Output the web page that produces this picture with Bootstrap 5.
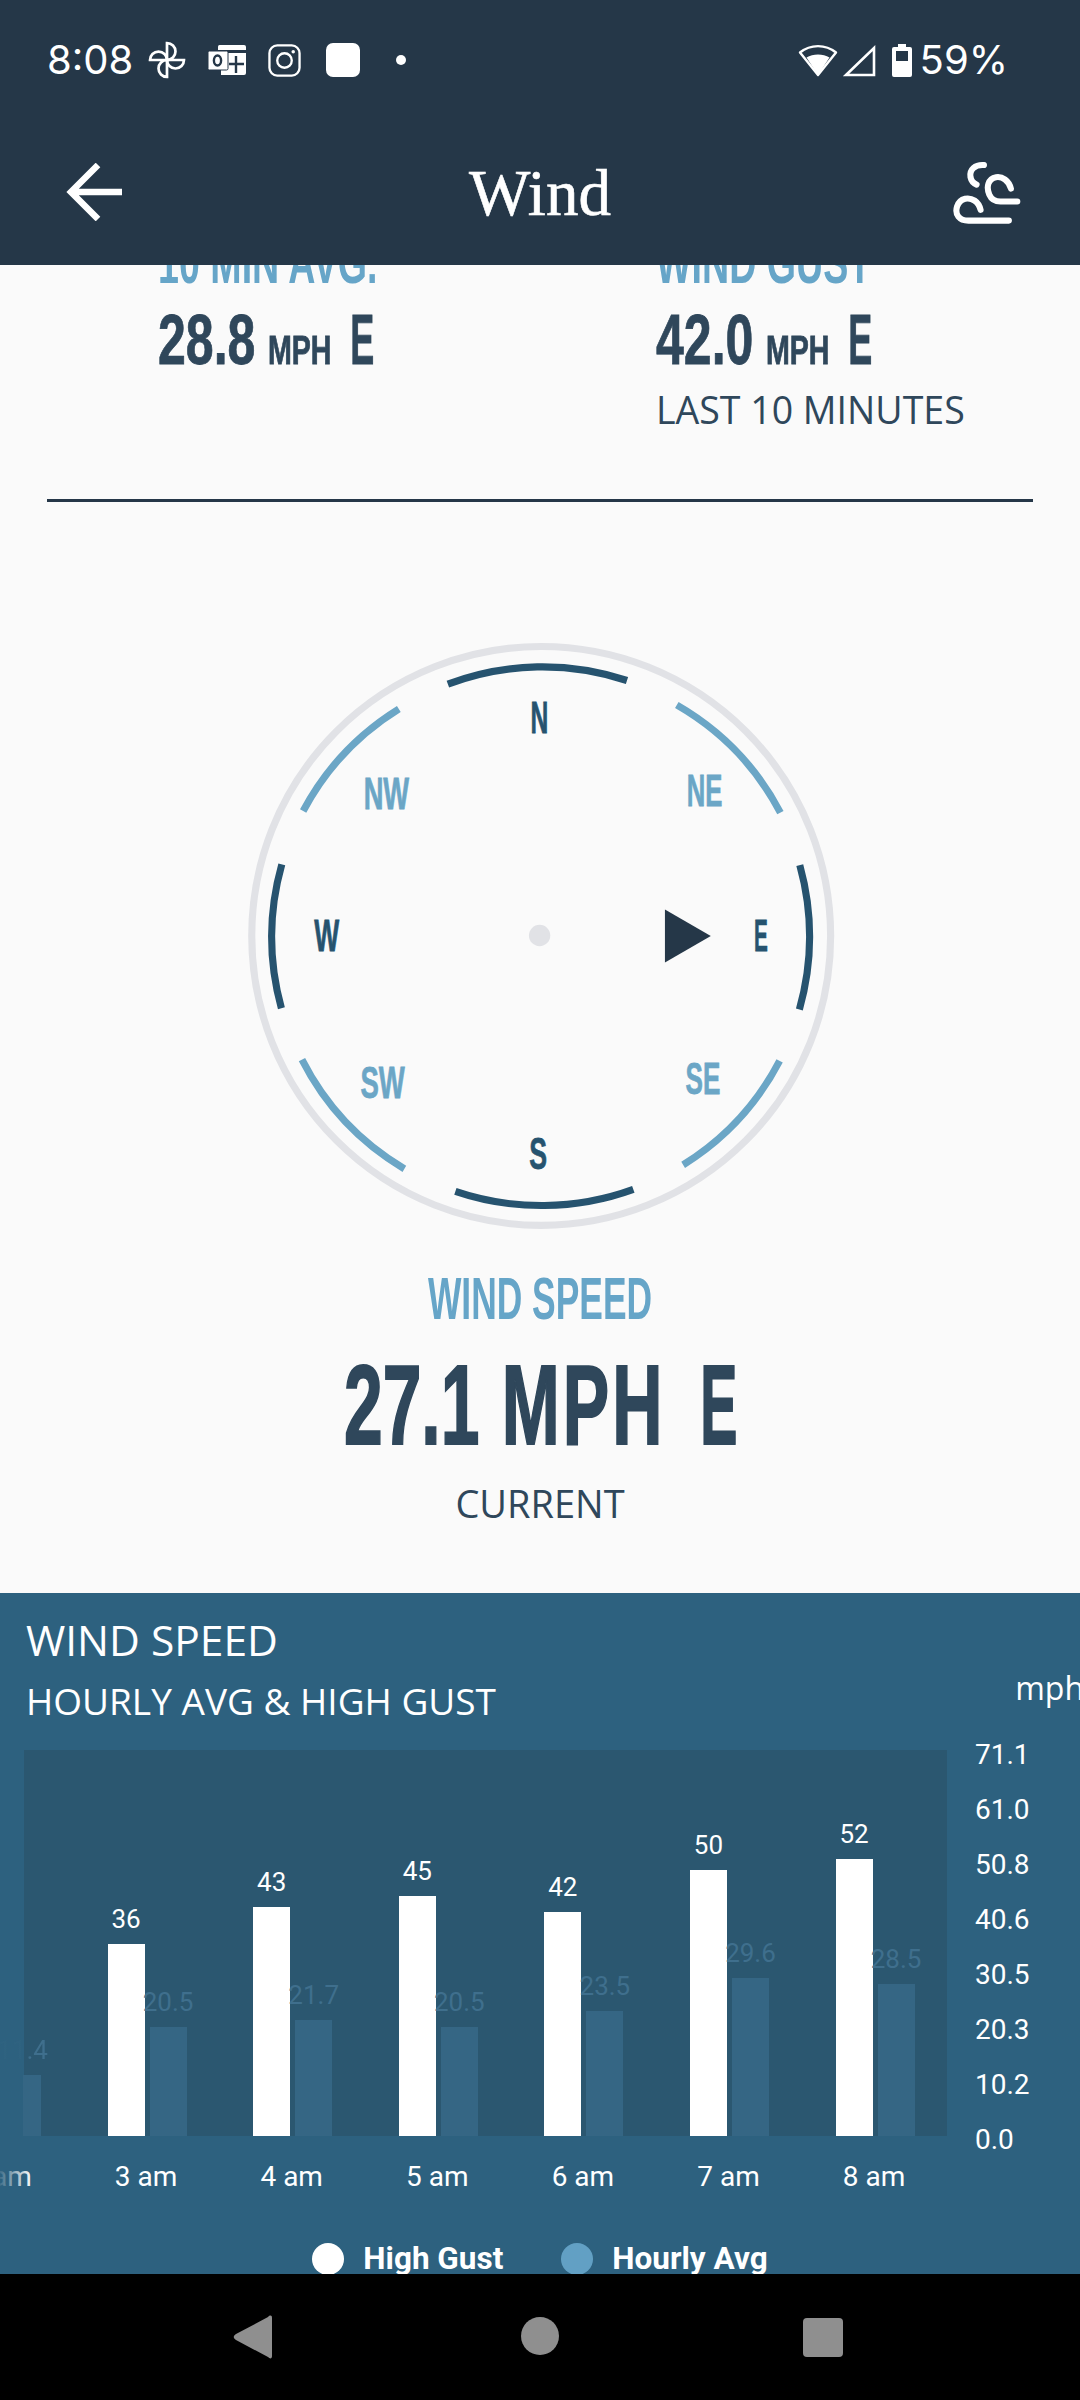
<!DOCTYPE html>
<html lang="en">

<head>
    <meta charset="UTF-8" />
    <meta name="viewport" content="width=device-width, initial-scale=1" />
    <title>Wind</title>
    <link href="https://cdn.jsdelivr.net/npm/bootstrap@5.3.2/dist/css/bootstrap.min.css" rel="stylesheet" />
    <style>
        html, body { width: 1080px; height: 2400px; overflow: hidden; background: #fafafa; }
        body { font-family: "Open Sans", sans-serif; color: #2f475b; }
        .phone { width: 1080px; height: 2400px; }
        .app-top { height: 265px; background: #253748; color: #fff; flex: none; }
        .status-row { height: 120px; padding: 0 72px 0 47px; font-family: Inter, sans-serif; font-size: 40px; line-height: 1; }
        .status-row svg { display: block; flex: none; }
        .gap-pin { margin-left: 15px; }
        .gap-app { margin-left: 22px; }
        .gap-ig { margin-left: 25px; }
        .gap-dot { margin-left: 36px; }
        .title-row { height: 145px; padding: 0 58px 0 60px; }
        .wind-title { font-family: "Liberation Serif", serif; font-size: 65px; line-height: 1; -webkit-text-stroke: .6px #fff; }
        .view { min-height: 0; overflow: hidden; background: #fafafa; }
        .stats { margin-top: -32.5px; }
        .stat-left { width: 656px; padding-left: 158px; }
        .narrow { display: block; white-space: nowrap; font-family: "Liberation Sans", sans-serif; font-weight: 700; transform-origin: 0 50%; }
        .stat-label { font-size: 60px; line-height: 60px; color: #66a5c8; transform: scaleX(.627); }
        .stat-value { font-size: 70px; line-height: 70px; margin-top: 12.5px; transform: scaleX(.715); color: #2f475b; -webkit-text-stroke: .8px #2f475b; }
        .stat-value small { font-size: 40px; font-weight: 700; line-height: 1; margin-left: -2px; }
        .stat-value i { display: inline-block; font-style: normal; line-height: 1; margin-left: 26px; transform: scaleX(.72); transform-origin: 0 50%; }
        .stat-note { font-size: 37.500px; line-height: 44px; margin-top: 12.5px; }
        .rule { height: 3px; margin: 67.5px 47px 0; background: #253748; }
        .dial { width: 620px; height: 620px; margin: 118px auto 0; display: block; }
        .dial text { font-family: "Liberation Sans", sans-serif; font-weight: 700; font-size: 112px; stroke-width: 2; }
        .speed-label { font-size: 60px; line-height: 60px; color: #66a5c8; margin-top: 28.5px; transform: scaleX(.59); transform-origin: 50% 50%; }
        .speed-value { font-size: 114px; line-height: 120px; margin: 16.5px 0 0 344px; transform: scaleX(.61); text-align: left; -webkit-text-stroke: 2px #2f475b; color: #2f475b; }
        .speed-value b { letter-spacing: 5px; margin-left: 5px; }
        .speed-value i { display: inline-block; font-style: normal; line-height: 1; margin-left: 57px; transform: scaleX(.8); transform-origin: 0 50%; }
        .speed-note { font-size: 38px; line-height: 44px; margin-top: 16px; }
        .chart-panel { margin-top: 68px; height: 700px; background: #2d617f; color: #fff; overflow: hidden; position: relative; }
        .panel-head { padding: 22px 0 0 26px; margin-bottom: 27.5px; }
        .panel-title { font-size: 42.500px; line-height: 50px; font-weight: 500; }
        .panel-sub { font-size: 37px; line-height: 44px; margin-top: 13.5px; }
        .panel-unit { font-size: 32px; line-height: 40px; position: relative; left: 4px; margin-bottom: 14.5px; }
        .chart-row { height: 386px; }
        .plot { width: 923px; height: 386px; margin-left: 24px; background: #2b5770; flex: none; font-family: Roboto, sans-serif; }
        .plot-group { width: 145.6px; height: 100%; flex: none; gap: 5px; }
        .plot-group:first-child { margin-left: -62px; }
        .plot-group:first-child .bar-avg { width: 18px; align-self: flex-end; }
        .plot-group:first-child .val-dim { background: linear-gradient(90deg, rgba(63, 111, 141, .12) 50%, #3f6f8d 65%); -webkit-background-clip: text; background-clip: text; color: transparent; }
        .bar-col { width: 37px; height: 100%; }
        .bar-val { font-size: 26px; line-height: 30px; margin-bottom: 10px; white-space: nowrap; }
        .bar-high { width: 37px; background: #fff; }
        .bar-avg { width: 37px; background: #356684; }
        .val-dim { color: #3f6f8d; }
        .y-axis { margin: -23.5px 0 0 28px; font-family: Roboto, sans-serif; font-size: 28px; }
        .y-axis div { height: 55.1px; line-height: 55.1px; }
        .x-axis { margin: 21px 0 0 -72.3px; font-family: Roboto, sans-serif; font-size: 28px; line-height: 40px; }
        .x-axis div { width: 145.6px; flex: none; text-align: center; }
        .x-fade { position: absolute; left: 0; top: 0; width: 32px; height: 100%; background: linear-gradient(90deg, rgba(45, 97, 127, .9), rgba(45, 97, 127, 0)); }
        .x-wrap { position: relative; }
        .chart-legend { margin-top: 44px; font-family: Roboto, sans-serif; font-weight: 700; font-size: 31.500px; line-height: 36px; }
        .legend-dot { width: 32px; height: 32px; border-radius: 50%; margin-right: 19px; }
        .dot-white { background: #fff; }
        .dot-blue { background: #62a0c4; margin-left: 58px; }
        .sys-nav { height: 126px; background: #000; flex: none; }
    </style>
</head>

<body>
    <div class="phone d-flex flex-column">
        <div class="app-top">
            <div class="status-row d-flex align-items-center">
                <span>8:08</span>
                <svg class="gap-pin" width="38" height="38" viewBox="-56 -56 112 112" fill="none" stroke="#fff" stroke-width="8">
                    <path d="M0 0V-50A25 25 0 0 1 0 0Z" />
                    <path d="M0 0V-50A25 25 0 0 1 0 0Z" transform="rotate(90)" />
                    <path d="M0 0V-50A25 25 0 0 1 0 0Z" transform="rotate(180)" />
                    <path d="M0 0V-50A25 25 0 0 1 0 0Z" transform="rotate(270)" />
                </svg>
                <svg class="gap-app" width="38" height="30" viewBox="0 0 38 30">
                    <path d="M10 1.5a1.5 1.5 0 0 1 1.5-1.5H36a2 2 0 0 1 2 2v3H10Z" fill="#fff" />
                    <path d="M13 8H38V28a2 2 0 0 1-2 2H13Z" fill="#fff" />
                    <rect x="0" y="6" width="20" height="19" rx="1.5" fill="#fff" stroke="#253748" stroke-width="1" />
                    <ellipse cx="9.5" cy="15.5" rx="3.6" ry="5" fill="none" stroke="#253748" stroke-width="2.4" />
                    <path d="M28 11V28M21 19H36" stroke="#253748" stroke-width="2.4" />
                </svg>
                <svg class="gap-app" width="33" height="33" viewBox="0 0 34 34" fill="none" stroke="#fff" stroke-width="2.4">
                    <rect x="1.5" y="1.5" width="31" height="31" rx="8" />
                    <circle cx="17" cy="17" r="7.5" />
                    <circle cx="26" cy="8" r="1.8" fill="#fff" stroke="none" />
                </svg>
                <svg class="gap-ig" width="34" height="34" viewBox="0 0 34 34"><rect width="34" height="34" rx="7" fill="#fff" /></svg>
                <svg class="gap-dot" width="10" height="10" viewBox="0 0 10 10"><circle cx="5" cy="5" r="5" fill="#fff" /></svg>
                <svg class="ms-auto" width="40" height="34" viewBox="0 0 40 34" fill="none">
                    <path d="M2 9.5C12.500 1 27.500 1 38 9.500L20 32Z" stroke="#fff" stroke-width="2.400" stroke-linejoin="round" />
                    <path d="M8.500 14.500C15 10.500 25 10.500 31.500 14.500L20 32Z" fill="#fff" />
                </svg>
                <svg class="ms-1" width="34" height="33" viewBox="0 0 34 33" fill="none"><path d="M32 4V31H4Z" stroke="#fff" stroke-width="2.600" /></svg>
                <svg class="ms-3" width="20" height="33" viewBox="0 0 20 33">
                    <path d="M6 0h8v3h4a2 2 0 0 1 2 2v26a2 2 0 0 1-2 2H2a2 2 0 0 1-2-2V5a2 2 0 0 1 2-2h4Z" fill="#fff" />
                    <rect x="4" y="7" width="12" height="10" fill="#253748" />
                </svg>
                <span class="ms-2">59%</span>
            </div>
            <div class="title-row d-flex align-items-center position-relative">
                <svg width="62" height="58" viewBox="0 0 62 58" fill="none" stroke="#fff" stroke-width="6.500" style="margin-top:-2px">
                    <path d="M38 2 11 29 38 56M11 29H63" />
                </svg>
                <span class="wind-title position-absolute top-50 start-50 translate-middle">Wind</span>
                <svg class="ms-auto" width="70" height="64" viewBox="512 420 206 190" fill="none" stroke="#fff" stroke-width="18" stroke-linecap="round">
                    <path d="M606 432C580 430 562 445 566 468 568 478 574 486 584 490" />
                    <path d="M686 502C680 478 660 465 642 468 618 472 612 498 622 520 628 534 640 540 655 540H705" />
                    <path d="M596 565C590 540 570 528 550 532 525 538 518 570 530 585 538 595 548 597 560 597H680" />
                </svg>
            </div>
        </div>

        <div class="view flex-grow-1">
            <div class="stats d-flex">
                <div class="stat-left">
                    <div class="narrow stat-label">10 MIN AVG.</div>
                    <div class="narrow stat-value">28.8 <small>MPH</small><i>E</i></div>
                </div>
                <div>
                    <div class="narrow stat-label">WIND GUST</div>
                    <div class="narrow stat-value">42.0 <small>MPH</small><i>E</i></div>
                    <div class="stat-note">LAST 10 MINUTES</div>
                </div>
            </div>
            <div class="rule"></div>

            <svg class="dial" viewBox="0 0 1568 1568" fill="none">
                <circle cx="787" cy="799" r="732" stroke="#e1e2e6" stroke-width="18" />
                <g stroke="#26536f" stroke-width="18">
                    <path d="M551 162A679 679 0 0 1 1004 153" />
                    <path d="M1441 620A679 679 0 0 1 1440 985" />
                    <path d="M1020 1440A679 679 0 0 1 570 1445" />
                    <path d="M130 982A679 679 0 0 1 131 618" />
                </g>
                <g stroke="#6ba6c6" stroke-width="18">
                    <path d="M1130 215A679 679 0 0 1 1392 487" />
                    <path d="M1390 1115A679 679 0 0 1 1146 1378" />
                    <path d="M441 1388A679 679 0 0 1 182 1112" />
                    <path d="M185 483A679 679 0 0 1 427 225" />
                </g>
                <g fill="#26536f" stroke="#26536f">
                    <text x="760" y="287" textLength="45" lengthAdjust="spacingAndGlyphs">N</text>
                    <text x="1325" y="838" textLength="35" lengthAdjust="spacingAndGlyphs">E</text>
                    <text x="757" y="1388" textLength="45" lengthAdjust="spacingAndGlyphs">S</text>
                    <text x="213" y="838" textLength="63" lengthAdjust="spacingAndGlyphs">W</text>
                </g>
                <g fill="#6ba6c6" stroke="#6ba6c6">
                    <text x="1155" y="470" textLength="90" lengthAdjust="spacingAndGlyphs">NE</text>
                    <text x="1152" y="1200" textLength="88" lengthAdjust="spacingAndGlyphs">SE</text>
                    <text x="330" y="1208" textLength="112" lengthAdjust="spacingAndGlyphs">SW</text>
                    <text x="338" y="478" textLength="115" lengthAdjust="spacingAndGlyphs">NW</text>
                </g>
                <circle cx="783" cy="798" r="27" fill="#e1e2e6" />
                <path d="M1100 732 1216 799 1100 866Z" fill="#253748" />
            </svg>

            <div class="text-center">
                <div class="narrow speed-label">WIND SPEED</div>
                <div class="narrow speed-value">27.1 <b>MPH</b><i>E</i></div>
                <div class="speed-note">CURRENT</div>
            </div>

            <div class="chart-panel">
                <div class="panel-head d-flex justify-content-between align-items-end">
                    <div>
                        <div class="panel-title">WIND SPEED</div>
                        <div class="panel-sub">HOURLY AVG &amp; HIGH GUST</div>
                    </div>
                    <div class="panel-unit">mph</div>
                </div>
                <div class="chart-row d-flex">
                    <div class="plot d-flex" id="plot"></div>
                    <div class="y-axis" id="yaxis"></div>
                </div>
                <div class="x-wrap">
                    <div class="x-axis d-flex" id="xaxis"></div>
                    <div class="x-fade"></div>
                </div>
                <div class="chart-legend d-flex align-items-center justify-content-center">
                    <span class="legend-dot dot-white"></span><span>High Gust</span>
                    <span class="legend-dot dot-blue"></span><span>Hourly Avg</span>
                </div>
            </div>
        </div>

        <div class="sys-nav d-flex align-items-center justify-content-center">
            <svg width="1080" height="126" viewBox="0 0 1080 126" fill="#8f8f8f">
                <path d="M272 44V82C272 85 270 85 268 83L236 66C233 64 233 62 236 60L268 43C270 41 272 41 272 44Z" />
                <circle cx="540" cy="62" r="19" />
                <rect x="803" y="44" width="40" height="39" rx="4" />
            </svg>
        </div>
    </div>

    <script src="https://cdn.jsdelivr.net/npm/bootstrap@5.3.2/dist/js/bootstrap.bundle.min.js"></script>
    <script>
        const horas = [
            { h: '2 am', alta: 30, media: 11.4 },
            { h: '3 am', alta: 36, media: 20.5 },
            { h: '4 am', alta: 43, media: 21.7 },
            { h: '5 am', alta: 45, media: 20.5 },
            { h: '6 am', alta: 42, media: 23.5 },
            { h: '7 am', alta: 50, media: 29.6 },
            { h: '8 am', alta: 52, media: 28.5 }
        ];
        const escala = 5.33;
        const plot = document.getElementById('plot');
        const xaxis = document.getElementById('xaxis');
        horas.forEach(d => {
            plot.innerHTML += `
<div class="plot-group d-flex">
<div class="bar-col d-flex flex-column align-items-center justify-content-end">
<div class="bar-val">${d.alta}</div>
<div class="bar-high" style="height:${d.alta * escala}px"></div>
</div>
<div class="bar-col d-flex flex-column align-items-center justify-content-end">
<div class="bar-val val-dim">${d.media}</div>
<div class="bar-avg" style="height:${d.media * escala}px"></div>
</div>
</div>`;
            xaxis.innerHTML += `<div>${d.h}</div>`;
        });
        document.getElementById('yaxis').innerHTML = ['71.1', '61.0', '50.8', '40.6', '30.5', '20.3', '10.2', '0.0']
            .map(v => `<div>${v}</div>`).join('');
    </script>
</body>

</html>
